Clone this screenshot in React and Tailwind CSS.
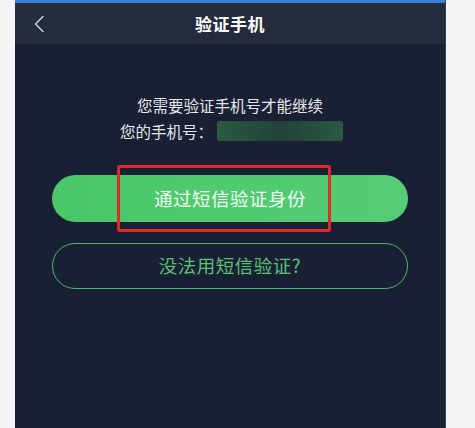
export default function App() {
    const font = { fontFamily: '"Noto Sans CJK SC", "Noto Sans", sans-serif' }

    return (
        <div className="flex w-[475px] h-[428px] bg-[#f4f5f7] overflow-hidden" style={font}>
            <div className="w-[15px] shrink-0"></div>

            <div className="w-[431px] shrink-0 flex flex-col bg-[#1a2033] border-r border-[#3a3f4a]">
                <div className="h-[3px] bg-[#3d7fd8]"></div>

                <div className="relative h-[41px] bg-[#242b3d] flex items-center justify-center">
                    <svg className="absolute left-[18px] top-[12px] w-[12px] h-[18px]" viewBox="0 0 12 18" fill="none" stroke="#c9ccd3" strokeWidth="1.6" strokeLinecap="round" strokeLinejoin="round">
                        <path d="M10 1.5 L2.5 9 L10 16.5" />
                    </svg>
                    <span className="text-[17px] font-bold text-white tracking-[0.5px]">验证手机</span>
                </div>

                <div className="flex flex-col items-center pt-[50px]">
                    <div className="text-[15.5px] leading-[22px] text-[#e6e8ec]">您需要验证手机号才能继续</div>
                    <div className="flex items-center w-full pl-[105px] mt-[4px]">
                        <span className="text-[15.5px] leading-[22px] text-[#e6e8ec]">您的手机号：</span>
                        <div className="ml-[4px] h-[20px] w-[126px] rounded-[2px] bg-gradient-to-r from-[#2e6a45] via-[#234b39] to-[#2d6845] opacity-80"></div>
                    </div>

                    <div className="relative mt-[33px] w-full px-[37px]">
                        <div className="h-[47px] rounded-full bg-gradient-to-r from-[#4ac766] to-[#55cd77] flex items-center justify-center">
                            <span className="text-[18.5px] text-[#f2fbf4] tracking-[0.5px]">通过短信验证身份</span>
                        </div>
                        <div className="absolute left-[102px] top-[-10px] w-[214px] h-[67px] border-[3px] border-[#e02a2a] rounded-[3px]"></div>
                    </div>

                    <div className="mt-[21px] w-full px-[37px]">
                        <div className="h-[46px] rounded-full border-[1.5px] border-[#4fb76c] flex items-center justify-center">
                            <span className="text-[18.5px] text-[#58c275] tracking-[0.5px]">没法用短信验证?</span>
                        </div>
                    </div>
                </div>
            </div>

            <div className="flex-1"></div>
        </div>
    )
}
